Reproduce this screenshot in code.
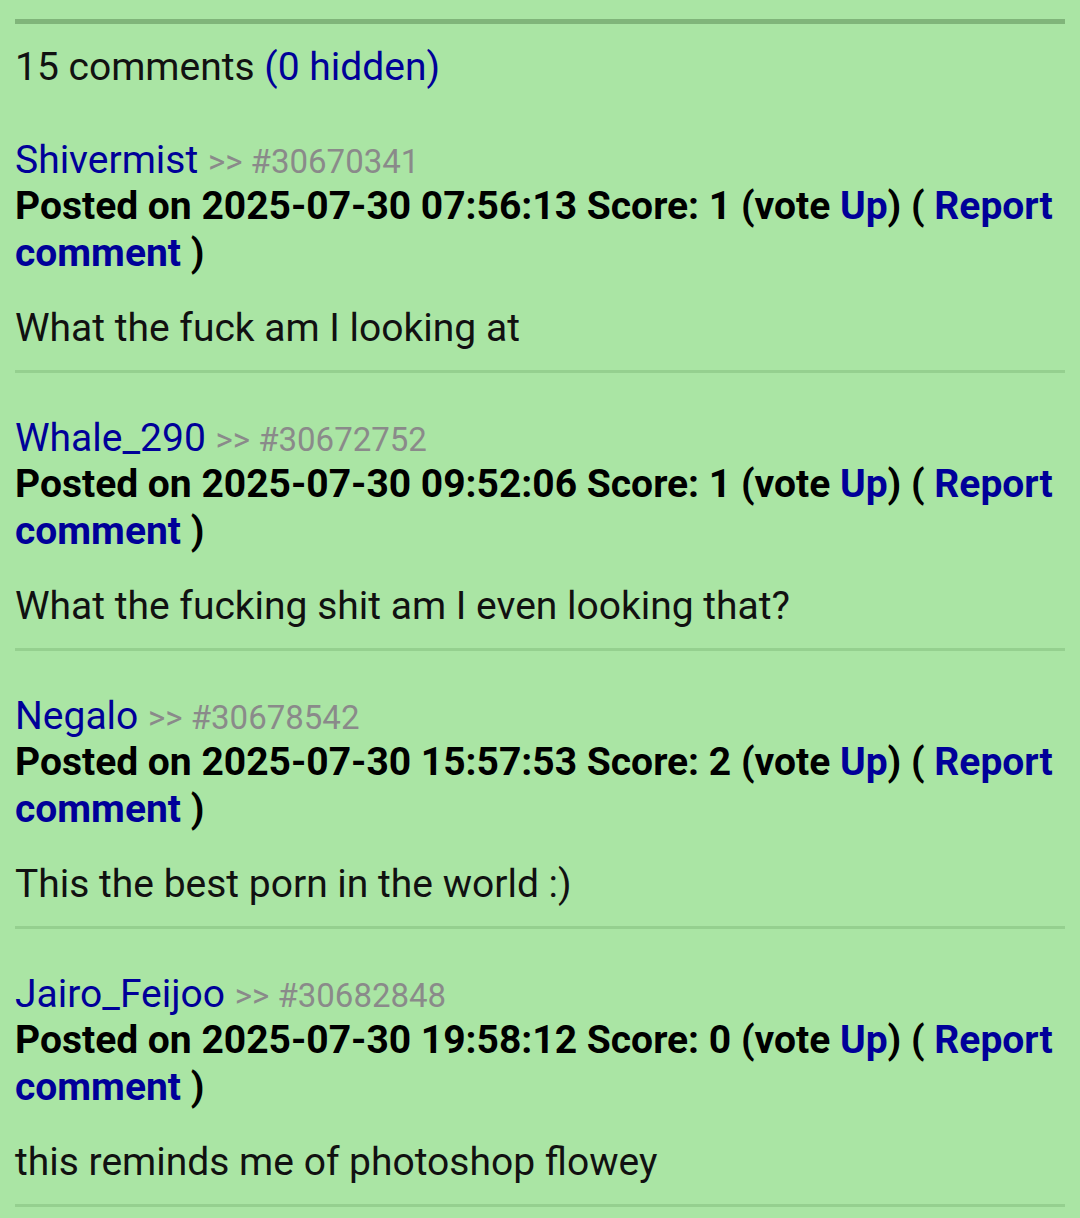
const comments = [
  {
    name: 'Shivermist',
    id: '30670341',
    date: '2025-07-30 07:56:13',
    score: 1,
    text: 'What the fuck am I looking at',
  },
  {
    name: 'Whale_290',
    id: '30672752',
    date: '2025-07-30 09:52:06',
    score: 1,
    text: 'What the fucking shit am I even looking that?',
  },
  {
    name: 'Negalo',
    id: '30678542',
    date: '2025-07-30 15:57:53',
    score: 2,
    text: 'This the best porn in the world :)',
  },
  {
    name: 'Jairo_Feijoo',
    id: '30682848',
    date: '2025-07-30 19:58:12',
    score: 0,
    text: 'this reminds me of photoshop flowey',
  },
]

function Comment({ c }: { c: (typeof comments)[number] }) {
  return (
    <div className="pt-[44px]">
      <div className="leading-[42px]">
        <a className="text-[#000099]">{c.name}</a>{' '}
        <span className="text-[33px] text-[#8a8a8a]">&gt;&gt; #{c.id}</span>
      </div>
      <p className="font-bold leading-[47px] text-black">
        Posted on {c.date} Score: {c.score} (vote <a className="text-[#000099]">Up</a>) ({' '}
        <a className="text-[#000099]">Report comment</a> )
      </p>
      <p className="mt-[28px] leading-[47px] text-[#111]">{c.text}</p>
      <div className="mt-[18px] h-[3px] bg-[#95d08f]" />
    </div>
  )
}

export default function App() {
  return (
    <div
      className="min-h-[1218px] bg-[#aae5a4] px-[15px] pt-[19px] text-[39px] text-[#111]"
      style={{ fontFamily: 'Roboto, "Noto Sans", sans-serif' }}
    >
      <div className="h-[5px] bg-[#80b57a]" />
      <div className="mb-[4px] pt-[20px] leading-[47px]">
        15 comments <a className="text-[#000099]">(0 hidden)</a>
      </div>
      <div>
        {comments.map((c) => (
          <Comment key={c.id} c={c} />
        ))}
      </div>
    </div>
  )
}
